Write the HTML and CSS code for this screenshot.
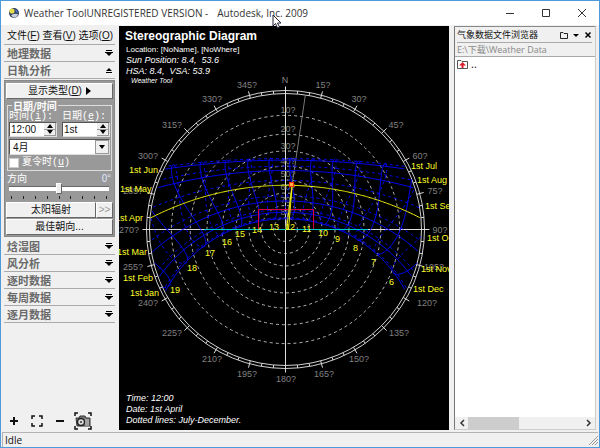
FILE: index.html
```html
<!DOCTYPE html>
<html lang="zh-CN">
<head>
<meta charset="utf-8">
<title>Weather Tool</title>
<link rel="stylesheet" href="styles.css">
</head>
<body>
<div class="window">
  <header class="titlebar">
    <svg class="app-icon" viewBox="0 0 12 12" aria-hidden="true">
      <circle cx="6" cy="6" r="5" fill="#33405c"/>
      <circle cx="4" cy="4" r="2.6" fill="#e6dc50"/>
      <path d="M3 8.500Q5 6 10 7Q9 11 5.500 10.500Z" fill="#c9d2e2"/>
      <path d="M7 2Q10 3 10 6L8 5Z" fill="#4a6fd0"/>
    </svg>
    <h1 class="title"><span>Weather ToolUNREGISTERED VERSION -</span><span>Autodesk, Inc. 2009</span></h1>
    <div class="window-buttons">
      <button aria-label="Minimize"><svg viewBox="0 0 10 10"><path d="M1 5.500H9"/></svg></button>
      <button aria-label="Maximize"><svg viewBox="0 0 10 10"><path d="M1.500 1.500H8.500V8.500H1.500Z"/></svg></button>
      <button aria-label="Close"><svg viewBox="0 0 10 10"><path d="M1 1L9 9M9 1L1 9"/></svg></button>
    </div>
    <svg class="cursor" viewBox="0 0 10 15" aria-hidden="true"><path d="M1 1V12L3.500 9.500L5.500 14L7.500 13L5.500 9H9Z" fill="#fff" stroke="#223" stroke-width="1"/></svg>
  </header>

  <main class="workspace">
    <aside class="sidebar">
      <nav class="menu">
        <button>文件(<u>F</u>)</button>
        <button>查看(<u>V</u>)</button>
        <button>选项(<u>O</u>)</button>
      </nav>
      <button class="section">地理数据<svg viewBox="0 0 8 7"><path d="M1 0H7V1H1ZM0 2H8V3H7L4 6L1 3H0Z"/></svg></button>
      <button class="section">日轨分析<svg viewBox="0 0 8 7"><path d="M4 1L7 4H1ZM1 5H7V6H1Z"/></svg></button>
      <form class="panel">
        <button type="button" class="raised">显示类型(<u>D</u>)<svg class="play" viewBox="0 0 5 8"><path d="M0 0L5 4L0 8Z"/></svg></button>
        <fieldset class="datetime">
          <legend>日期/时间</legend>
          <div class="pair">
            <div class="field">
              <label for="time">时间(<u>i</u>):</label>
              <div class="spin"><input id="time" value="12:00"><span class="steps"><button type="button" aria-label="+"><svg viewBox="0 0 6 4"><path d="M0 4L3 0L6 4Z"/></svg></button><button type="button" aria-label="-"><svg viewBox="0 0 6 4"><path d="M0 0L3 4L6 0Z"/></svg></button></span></div>
            </div>
            <div class="field">
              <label for="day">日期(<u>e</u>):</label>
              <div class="spin"><input id="day" value="1st"><span class="steps"><button type="button" aria-label="+"><svg viewBox="0 0 6 4"><path d="M0 4L3 0L6 4Z"/></svg></button><button type="button" aria-label="-"><svg viewBox="0 0 6 4"><path d="M0 0L3 4L6 0Z"/></svg></button></span></div>
            </div>
          </div>
          <div class="combo">
            <select aria-label="月份"><option>4月</option></select>
            <span class="combo-arrow"><svg viewBox="0 0 6 4"><path d="M0 0H6L3 4Z"/></svg></span>
          </div>
          <label class="check"><input type="checkbox"><span>夏令时(<u>u</u>)</span></label>
        </fieldset>
        <div class="orientation">
          <label for="dir">方向</label><output for="dir">0°</output>
          <input id="dir" type="range" min="-180" max="180" value="0">
          <div class="ticks"><i></i><i></i><i></i><i></i><i></i><i></i><i></i><i></i><i></i></div>
        </div>
        <div class="button-row">
          <button type="button" class="raised">太阳辐射</button>
          <button type="button" class="raised more" disabled>&gt;&gt;</button>
        </div>
        <button type="button" class="raised">最佳朝向...</button>
      </form>
      <button class="section">焓湿图<svg viewBox="0 0 8 7"><path d="M1 0H7V1H1ZM0 2H8V3H7L4 6L1 3H0Z"/></svg></button>
      <button class="section">风分析<svg viewBox="0 0 8 7"><path d="M1 0H7V1H1ZM0 2H8V3H7L4 6L1 3H0Z"/></svg></button>
      <button class="section">逐时数据<svg viewBox="0 0 8 7"><path d="M1 0H7V1H1ZM0 2H8V3H7L4 6L1 3H0Z"/></svg></button>
      <button class="section">每周数据<svg viewBox="0 0 8 7"><path d="M1 0H7V1H1ZM0 2H8V3H7L4 6L1 3H0Z"/></svg></button>
      <button class="section">逐月数据<svg viewBox="0 0 8 7"><path d="M1 0H7V1H1ZM0 2H8V3H7L4 6L1 3H0Z"/></svg></button>
      <div class="tools">
        <button aria-label="Zoom in"><svg viewBox="0 0 18 18"><path d="M5 9H13M9 5V13" stroke-width="2"/></svg></button>
        <button aria-label="Fit"><svg viewBox="0 0 18 18"><path d="M4 7V4H7M11 4H14V7M14 11V14H11M7 14H4V11" stroke-width="1.500"/></svg></button>
        <button aria-label="Zoom out"><svg viewBox="0 0 18 18"><path d="M5 9H13" stroke-width="2"/></svg></button>
        <button aria-label="Snapshot"><svg viewBox="0 0 18 18"><path d="M1 4V1H4M14 1H17V4M17 14V17H14M4 17H1V14" stroke-width="1.500"/><path d="M2 6H5L6 4H11L12 6H16V14H3Z" fill="#777" stroke="#333"/><circle cx="7" cy="10" r="3.500" fill="#ddd" stroke="#222" stroke-width="1.500"/><circle cx="7" cy="10" r="1" fill="#333" stroke="none"/><path d="M12 7V14M14 7V14" stroke="#ccc"/></svg></button>
      </div>
    </aside>

    <section class="view">
      <svg class="chart" viewBox="119 26 330 404" preserveAspectRatio="xMidYMin meet" role="img" aria-label="Stereographic Diagram">
        <g id="grid"></g>
        <g class="azimuth">
          <text x="285" y="83">N</text><text x="323" y="88">15?</text><text x="359" y="102">30?</text><text x="396" y="128">45?</text><text x="420" y="159">60?</text><text x="435" y="194">75?</text><text x="440" y="233">90?</text><text x="434" y="270">105?</text><text x="427" y="306">120?</text><text x="399" y="336">135?</text><text x="359" y="362">150?</text><text x="324" y="377">165?</text><text x="286" y="382">180?</text><text x="247" y="377">195?</text><text x="212" y="362">210?</text><text x="172" y="336">225?</text><text x="148" y="306">240?</text><text x="133" y="270">255?</text><text x="129" y="233">270?</text><text x="133" y="194">285?</text><text x="148" y="159">300?</text><text x="172" y="128">315?</text><text x="212" y="102">330?</text><text x="247" y="88">345?</text>
          <text x="288" y="113">10?</text><text x="288" y="132">20?</text><text x="288" y="149">30?</text><text x="288" y="164">40?</text><text x="288" y="177">50?</text><text x="288" y="190">60?</text><text x="288" y="203">70?</text><text x="288" y="215">80?</text>
        </g>
        <g id="sunpaths"></g>
        <g id="marks"></g>
        <g class="dates">
          <text x="129" y="173">1st Jun</text><text x="120" y="192">1st May</text><text x="115" y="221">1st Apr</text><text x="117" y="255">1st Mar</text><text x="123" y="281">1st Feb</text><text x="130" y="296">1st Jan</text>
          <text x="411" y="169">1st Jul</text><text x="417" y="183">1st Aug</text><text x="425" y="209">1st Sep</text><text x="427" y="241">1st Oct</text><text x="421" y="272">1st Nov</text><text x="413" y="292">1st Dec</text>
          <text x="170" y="293">19</text><text x="187" y="271">18</text><text x="205" y="256">17</text><text x="222" y="245">16</text><text x="235" y="237">15</text><text x="252" y="233">14</text><text x="269" y="230">13</text><text x="285" y="230">12</text><text x="302" y="232">11</text><text x="318" y="236">10</text><text x="335" y="242">9</text><text x="353" y="251">8</text><text x="371" y="265">7</text><text x="389" y="285">6</text>
        </g>
        <g class="caption">
          <text class="heading" x="125" y="40">Stereographic Diagram</text>
          <text class="small" x="126" y="52">Location: [NoName], [NoWhere]</text>
          <g class="slanted">
            <text x="126" y="63">Sun Position: 8.4,&#160; 53.6</text>
            <text x="126" y="74">HSA: 8.4,&#160; VSA: 53.9</text>
            <text class="tiny" x="131" y="83">Weather Tool</text>
            <text x="126" y="401">Time: 12:00</text>
            <text x="126" y="412">Date: 1st April</text>
            <text x="126" y="423">Dotted lines: July-December.</text>
          </g>
        </g>
      </svg>
    </section>

    <aside class="browser">
      <div class="browser-head">
        <div class="browser-title">
          <h2>气象数据文件浏览器</h2>
          <button aria-label="Folder"><svg viewBox="0 0 8 8"><path d="M.5 7.500V1.500H3L4 2.500H7.500V7.500Z" fill="none" stroke="#222"/></svg></button>
          <button aria-label="Menu"><svg viewBox="0 0 8 8"><path d="M1 3H7L4 6Z"/></svg></button>
          <button aria-label="Close"><svg viewBox="0 0 8 8"><path d="M1.500 1.500L6.500 6.500M6.500 1.500L1.500 6.500" stroke="#000" stroke-width="1.500"/></svg></button>
        </div>
        <div class="path">E:\下载\Weather Data</div>
      </div>
      <div class="files">
        <a href="#"><svg viewBox="0 0 11 10"><path d="M.5 9.500V1.500H4L5 2.500H10.500V9.500Z" fill="#fff" stroke="#555"/><path d="M5.500 3L9 6.500H6.500V9H4.500V6.500H2Z" fill="#d8202c"/></svg>..</a>
      </div>
      <div class="scrollbar">
        <button aria-label="Left"><svg viewBox="0 0 6 8"><path d="M5 1L2 4L5 7"/></svg></button>
        <span class="track"><span class="thumb"></span></span>
        <button aria-label="Right"><svg viewBox="0 0 6 8"><path d="M1 1L4 4L1 7"/></svg></button>
      </div>
    </aside>
  </main>

  <footer class="status"><span>Idle</span><svg viewBox="0 0 10 10" aria-hidden="true"><path d="M1 10L10 1M4 10L10 4M7 10L10 7"/></svg></footer>
</div>
<script src="chart.js"></script>
</body>
</html>
```
FILE: styles.css
```css
* { box-sizing: border-box; }
body {
  margin: 0;
  font: 11px/14px "Noto Sans", "Noto Sans CJK SC", sans-serif;
  color: #111;
}
button {
  margin: 0;
  padding: 0;
  border: 0;
  background: none;
  font: inherit;
  color: inherit;
}
svg { display: block; }
u { text-underline-offset: 1px; }

.window {
  display: flex;
  flex-direction: column;
  height: 100vh;
  border: 1px solid #4f9bd9;
  background: #f0f0f0;
}
.titlebar {
  position: relative;
  display: flex;
  flex: none;
  align-items: center;
  height: 24px;
  padding: 0 8px 0 7px;
  background: #fff;
}
.app-icon { width: 12px; height: 12px; }
.title {
  display: flex;
  flex: 1;
  gap: 9px;
  margin: 0 0 0 4px;
  font: 10px/14px "Open Sans", sans-serif;
  color: #333;
  white-space: nowrap;
}
.window-buttons { display: flex; gap: 26px; padding-right: 4px; }
.window-buttons svg { width: 10px; height: 10px; fill: none; stroke: #333; }
.cursor { position: absolute; left: 271px; top: 13px; width: 10px; height: 15px; }

.workspace {
  display: grid;
  flex: 1;
  grid-template-columns: 118px 1fr 150px;
  min-height: 0;
}

.sidebar {
  display: flex;
  flex-direction: column;
  min-height: 0;
  padding: 3px 4px 0 3px;
}
.menu {
  display: flex;
  flex: none;
  justify-content: space-between;
  height: 17px;
  padding: 0 2px 0 3px;
  border-bottom: 1px solid #aaa;
  font: 10px/16px "Liberation Sans", "Noto Sans CJK SC", sans-serif;
  white-space: nowrap;
}
.section {
  display: flex;
  flex: none;
  align-items: center;
  justify-content: space-between;
  height: 17px;
  padding: 0 2px 0 3px;
  border-bottom: 1px solid #aaa;
  font: bold 11px/16px "Noto Sans CJK SC", sans-serif;
  color: #6a6a6a;
}
.section svg { width: 8px; height: 7px; fill: #000; }

.panel {
  display: flex;
  flex: none;
  flex-direction: column;
  gap: 1px;
  margin: 1px 0;
  padding: 2px 1px 1px;
  border: 1px solid #888;
  background: #999;
}
.raised {
  display: flex;
  flex: 1;
  align-items: center;
  justify-content: center;
  height: 16px;
  border: 1px solid;
  border-color: #fff #666 #666 #fff;
  background: #f0f0f0;
  font: 10px/14px "Liberation Sans", "Noto Sans CJK SC", sans-serif;
}
.panel > .raised { flex: none; }
.play { width: 5px; height: 8px; margin-left: 4px; }
.datetime {
  min-width: 0;
  margin: 0 1px;
  padding: 0 1px 2px;
  border: 1px solid #ddd;
  color: #fff;
}
.datetime legend {
  height: 11px;
  margin-left: 3px;
  padding: 0 1px;
  font: bold 10px/11px "Noto Sans CJK SC", sans-serif;
}
.pair { display: flex; justify-content: space-between; gap: 5px; }
.field { flex: 1; min-width: 0; }
.field label, .check {
  display: block;
  font: 10px/11px "Liberation Mono", "Noto Sans CJK SC", monospace;
  white-space: nowrap;
}
.spin, .combo {
  display: flex;
  height: 15px;
  border: 1px solid;
  border-color: #555 #ddd #ddd #555;
  background: #fff;
}
.spin input, .combo select {
  flex: 1;
  min-width: 0;
  margin: 0;
  padding: 0 1px;
  border: 0;
  outline: 0;
  appearance: none;
  background: #fff;
  font: 10px/13px "Liberation Sans", "Noto Sans CJK SC", sans-serif;
  color: #111;
}
.steps { display: grid; width: 12px; grid-template-rows: 1fr 1fr; background: #eee; }
.steps button {
  display: grid;
  place-items: center;
  border: 1px solid #999;
  border-width: 0 1px 1px 0;
}
.steps svg, .combo-arrow svg { width: 6px; height: 4px; }
.combo { height: 16px; margin-top: 2px; }
.combo select { padding-left: 3px; }
.combo-arrow {
  display: grid;
  place-items: center;
  width: 14px;
  border: 1px solid #999;
  background: #f0f0f0;
}
.check { display: flex; align-items: center; gap: 3px; margin-top: 2px; }
.check input {
  width: 10px;
  height: 10px;
  margin: 0;
  appearance: none;
  border: 1px solid #ccc;
  background: #fff;
}
.orientation {
  display: grid;
  grid-template-columns: 1fr auto;
  padding: 0 2px 2px 1px;
  font: 10px/11px "Noto Sans CJK SC", sans-serif;
  color: #fff;
}
.orientation output { color: #dfe6ff; }
.orientation input {
  grid-column: 1 / -1;
  width: calc(100% - 4px);
  height: 11px;
  margin: 0 2px;
  appearance: none;
  background: linear-gradient(#666, #666) 0 3px / 100% 1px no-repeat,
    linear-gradient(#fff, #fff) 0 4px / 100% 4px no-repeat;
}
.orientation input::-webkit-slider-thumb {
  appearance: none;
  width: 6px;
  height: 11px;
  border: 1px solid #777;
  border-color: #fff #666 #666 #fff;
  background: #eee;
}
.ticks {
  display: flex;
  grid-column: 1 / -1;
  justify-content: space-between;
  margin: 2px 4px 0;
}
.ticks i { width: 1px; height: 3px; background: #222; }
.button-row { display: flex; }
.button-row .more { flex: none; width: 17px; color: #999; }

.tools {
  display: flex;
  justify-content: space-between;
  margin-top: auto;
  padding: 0 23px 0 1px;
}
.tools svg { width: 18px; height: 18px; fill: none; stroke: #111; }

.view {
  min-width: 0;
  min-height: 0;
  margin-top: 1px;
  background: #000;
}
.chart {
  width: 100%;
  height: 100%;
  overflow: hidden;
  font-family: "Liberation Sans", sans-serif;
  font-size: 9px;
}
.azimuth { fill: #808080; text-anchor: middle; }
.dates { fill: #ffff28; }
.caption { fill: #fff; }
.heading { font-size: 12px; font-weight: bold; }
.slanted { font-style: italic; }
.small { font-size: 8px; }
.tiny { font-size: 7px; }
.ring { fill: none; stroke: #d0d0d0; }
.altitude { fill: none; stroke: #b4b4b4; stroke-dasharray: 3 3; }
.tick, .axis { stroke: #ddd; }
.sun { fill: none; stroke: #0000f0; }
.sun.late { stroke-dasharray: 3 3; }
.today { fill: none; stroke: #f0f000; }
.bearing { stroke: #777; }
.room { fill: none; stroke: #d80040; }
.extent { stroke: #00c8c8; }
.marker { fill: #ffb040; stroke: #ff2a00; }

.browser {
  display: flex;
  flex-direction: column;
  min-height: 0;
  margin: 1px 3px 0 5px;
  border: 1px solid;
  border-color: #888 #ccc #ccc #777;
  background: #fff;
}
.browser-head {
  flex: none;
  padding: 1px 3px 0 2px;
  border-bottom: 1px solid #aaa;
  background: #f0f0f0;
}
.browser-title {
  display: flex;
  align-items: center;
  gap: 4px;
  height: 15px;
  border-bottom: 1px solid #aaa;
}
.browser-title h2 {
  flex: 1;
  margin: 0;
  font: 9px/14px "Noto Sans CJK SC", sans-serif;
  white-space: nowrap;
}
.browser-title svg { width: 8px; height: 8px; }
.path { font: 9px/13px "Open Sans", "Noto Sans CJK SC", sans-serif; color: #888; }
.files { flex: 1; padding: 1px 2px; }
.files a { display: flex; align-items: center; gap: 3px; color: #222; text-decoration: none; line-height: 12px; }
.files svg { width: 11px; height: 10px; }
.scrollbar { display: flex; flex: none; align-items: center; height: 12px; background: #f0f0f0; }
.scrollbar button { display: grid; place-items: center; width: 13px; }
.scrollbar svg { width: 6px; height: 8px; fill: none; stroke: #333; stroke-width: 1.5; }
.track { flex: 1; height: 12px; }
.thumb { display: block; width: 45%; height: 12px; background: #cdcdcd; }

.status {
  display: flex;
  flex: none;
  align-items: center;
  justify-content: space-between;
  height: 15px;
  margin: 2px 1px 0;
  padding-left: 2px;
  border: 1px solid #b4b4b4;
  border-width: 1px 0 0 1px;
  font: 10px/13px "Open Sans", sans-serif;
}
.status svg { width: 10px; height: 10px; fill: none; stroke: #999; }
```
FILE: chart.js
```js
// Stereographic sun-path diagram: horizon circle of radius R round (CX, CY), north up.
const CX = 285.5, CY = 229.5, R = 136, OUTER = 139;
const LATITUDE = -32, LONGITUDE_OFFSET = -4;
const rad = Math.PI / 180;

function add(parent, tag, attrs) {
  const el = document.createElementNS("http://www.w3.org/2000/svg", tag);
  for (const name in attrs) el.setAttribute(name, attrs[name]);
  document.getElementById(parent).append(el);
}

function polar(azimuth, r) {
  return [CX + r * Math.sin(azimuth * rad), CY - r * Math.cos(azimuth * rad)];
}

function line(parent, cls, [x1, y1], [x2, y2]) {
  add(parent, "line", { class: cls, x1, y1, x2, y2 });
}

// Screen position of the sun, or null when it is below the horizon.
function sun(day, hour) {
  const d = 23.45 * rad * Math.sin(2 * Math.PI * (284 + day) / 365);
  const b = 2 * Math.PI * (day - 81) / 364;
  const equation = 9.87 * Math.sin(2 * b) - 7.53 * Math.cos(b) - 1.5 * Math.sin(b);
  const h = (15 * (hour - 12) + LONGITUDE_OFFSET + equation / 4) * rad;
  const l = LATITUDE * rad;
  const up = Math.sin(d) * Math.sin(l) + Math.cos(d) * Math.cos(l) * Math.cos(h);
  if (up < 0) return null;
  const east = -Math.cos(d) * Math.sin(h);
  const north = Math.sin(d) * Math.cos(l) - Math.cos(d) * Math.sin(l) * Math.cos(h);
  return [CX + R * east / (1 + up), CY - R * north / (1 + up)];
}

function trace(cls, points) {
  const shown = points.filter(Boolean);
  if (shown.length < 2) return;
  add("sunpaths", "path", { class: cls, d: "M" + shown.map(p => p.map(v => v.toFixed(1)).join(" ")).join("L") });
}

add("grid", "circle", { class: "ring", cx: CX, cy: CY, r: R });
add("grid", "circle", { class: "ring", cx: CX, cy: CY, r: OUTER });
for (let altitude = 10; altitude < 90; altitude += 10) {
  add("grid", "circle", { class: "altitude", cx: CX, cy: CY, r: R * Math.tan((90 - altitude) / 2 * rad) });
}
for (let azimuth = 0; azimuth < 360; azimuth += 5) {
  line("grid", "tick", polar(azimuth, R), polar(azimuth, azimuth % 15 ? OUTER : OUTER + 4));
}
line("grid", "axis", [CX, CY - OUTER], [CX, CY + OUTER]);
line("grid", "axis", [CX - OUTER, CY], [CX + OUTER + 5, CY]);
line("grid", "bearing", [CX, CY], polar(8.4, R));

const firsts = [1, 32, 60, 91, 121, 152, 182, 213, 244, 274, 305, 335];
firsts.forEach((day, month) => {
  if (month === 3) return;
  const points = [];
  for (let hour = 4; hour <= 20; hour += 0.1) points.push(sun(day, hour));
  trace(month < 6 ? "sun" : "sun late", points);
});

// Hour lines: one run for each half of the year.
for (let hour = 6; hour <= 19; hour++) {
  const early = [], late = [];
  for (let day = 1; day <= 181; day += 4) early.push(sun(day, hour));
  for (let day = 182; day <= 365; day += 4) late.push(sun(day, hour));
  trace("sun", early);
  trace("sun late", late);
}

const today = [];
for (let hour = 4; hour <= 20; hour += 0.05) today.push(sun(91, hour));
trace("today", today);

line("marks", "extent", [204, CY], [368, CY]);
add("marks", "path", { class: "room", d: "M258.500 229V209.500H313.500V229" });
const now = sun(91, 12);
line("marks", "today", [CX + 1, CY], now);
line("marks", "today", [CX + 3, CY], now);
add("marks", "rect", { class: "marker", x: Math.round(now[0]) - 2.5, y: Math.round(now[1]) - 2.5, width: 4, height: 4 });
```
